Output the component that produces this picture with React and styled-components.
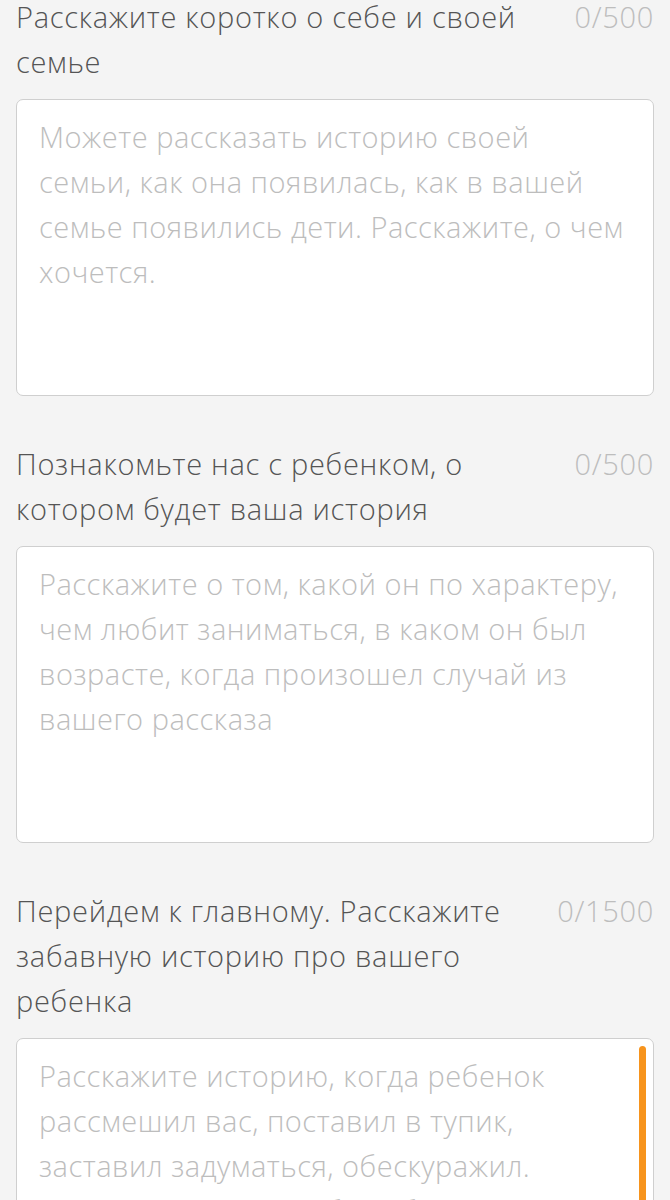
import React from "react";
import styled, { createGlobalStyle } from "styled-components";

const Global = createGlobalStyle`
  html, body { margin: 0; padding: 0; background: #f4f4f4; }
  body { font-family: "Open Sans", "Noto Sans", sans-serif; overflow: hidden; }
  * { box-sizing: border-box; }
`;

const Page = styled.div`
  margin-top: -6px;
  padding: 0 16px;
  display: flex;
  flex-direction: column;
  gap: 45px;
`;

const Field = styled.div`
  display: flex;
  flex-direction: column;
  gap: 15px;
`;

const Head = styled.div`
  display: flex;
  align-items: flex-start;
  justify-content: space-between;
  gap: 36px;
`;

const Label = styled.label`
  flex: 1;
  font-size: 29px;
  line-height: 45px;
  font-weight: 300;
  letter-spacing: 0.7px;
  color: #555555;
`;

const Counter = styled.span`
  font-size: 29px;
  line-height: 45px;
  font-weight: 300;
  letter-spacing: 0.7px;
  color: #bdbdbd;
  white-space: nowrap;
`;

const Box = styled.div`
  position: relative;
`;

const Area = styled.textarea`
  display: block;
  width: 100%;
  height: 297px;
  resize: none;
  border: 1.5px solid #cfcfcf;
  border-radius: 7px;
  background: #ffffff;
  padding: 14px 26.5px 14px 22px;
  font-family: inherit;
  font-size: 29px;
  line-height: 45px;
  font-weight: 300;
  letter-spacing: 0.5px;
  color: #555;
  outline: none;
  overflow: hidden;
  &::placeholder { color: #bdbdbd; opacity: 1; }
`;

const Scroll = styled.div`
  position: absolute;
  top: 8px;
  right: 8px;
  width: 7px;
  bottom: 8px;
  border-radius: 4px;
  background: #f7941d;
`;

const fields = [
  {
    label: "Расскажите коротко о себе и своей семье",
    max: 500,
    ph: "Можете рассказать историю своей семьи, как она появилась, как в вашей семье появились дети. Расскажите, о чем хочется.",
  },
  {
    label: "Познакомьте нас с ребенком, о котором будет ваша история",
    max: 500,
    ph: "Расскажите о том, какой он по характеру, чем любит заниматься, в каком он был возрасте, когда произошел случай из вашего рассказа",
  },
  {
    label: "Перейдем к главному. Расскажите забавную историю про вашего ребенка",
    max: 1500,
    ph: "Расскажите историю, когда ребенок рассмешил вас, поставил в тупик, заставил задуматься, обескуражил. Опишите, как вел себя ребенок, что говорил, как вы на это отреагировали.",
    scroll: true,
  },
];

export default function App() {
  return (
    <>
      <Global />
      <Page>
        {fields.map((f, i) => (
          <Field key={i}>
            <Head>
              <Label>{f.label}</Label>
              <Counter>0/{f.max}</Counter>
            </Head>
            <Box>
              <Area placeholder={f.ph} />
              {f.scroll && <Scroll />}
            </Box>
          </Field>
        ))}
      </Page>
    </>
  );
}
